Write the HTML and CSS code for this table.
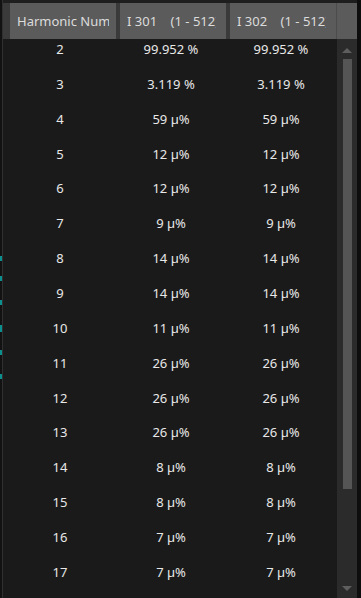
FILE: index.html
```html
<!DOCTYPE html>
<html>
<head>
<meta charset="utf-8">
<link rel="stylesheet" href="styles.css">
</head>
<body>
<div class="frame">
  <div class="edge">
    <span class="mark m1"></span><span class="mark m2"></span><span class="mark m3"></span><span class="mark m4"></span><span class="mark m5"></span><span class="mark m6"></span>
  </div>
  <div class="table">
    <div class="head">
      <div class="hcell first"><span>Harmonic Number</span></div>
      <div class="hcell"><span>I 301    (1 - 512)</span></div>
      <div class="hcell"><span>I 302    (1 - 512)</span></div>
      <div class="hcorner"></div>
    </div>
    <div class="main">
      <div class="rows-clip">
        <div class="rows">
          <div class="row"><span>2</span><span>99.952 %</span><span>99.952 %</span></div>
          <div class="row"><span>3</span><span>3.119 %</span><span>3.119 %</span></div>
          <div class="row"><span>4</span><span>59 µ%</span><span>59 µ%</span></div>
          <div class="row"><span>5</span><span>12 µ%</span><span>12 µ%</span></div>
          <div class="row"><span>6</span><span>12 µ%</span><span>12 µ%</span></div>
          <div class="row"><span>7</span><span>9 µ%</span><span>9 µ%</span></div>
          <div class="row"><span>8</span><span>14 µ%</span><span>14 µ%</span></div>
          <div class="row"><span>9</span><span>14 µ%</span><span>14 µ%</span></div>
          <div class="row"><span>10</span><span>11 µ%</span><span>11 µ%</span></div>
          <div class="row"><span>11</span><span>26 µ%</span><span>26 µ%</span></div>
          <div class="row"><span>12</span><span>26 µ%</span><span>26 µ%</span></div>
          <div class="row"><span>13</span><span>26 µ%</span><span>26 µ%</span></div>
          <div class="row"><span>14</span><span>8 µ%</span><span>8 µ%</span></div>
          <div class="row"><span>15</span><span>8 µ%</span><span>8 µ%</span></div>
          <div class="row"><span>16</span><span>7 µ%</span><span>7 µ%</span></div>
          <div class="row"><span>17</span><span>7 µ%</span><span>7 µ%</span></div>
        </div>
      </div>
      <div class="scrollbar">
        <div class="arrow up"></div>
        <div class="track"><div class="thumb"></div></div>
        <div class="arrow down"></div>
      </div>
    </div>
  </div>
  <div class="redge"></div>
</div>
</body>
</html>
```
FILE: styles.css
```css
html, body {
  margin: 0;
  padding: 0;
  background: #1a1a1a;
}
body {
  font-family: "Noto Sans", "Open Sans", sans-serif;
  font-size: 13px;
  color: #e8e8e8;
}
.frame {
  width: 361px;
  height: 598px;
  display: flex;
  overflow: hidden;
}
.edge {
  width: 2px;
  background: #121212;
  border-right: 1px solid #303030;
  position: relative;
  flex: none;
}
.mark {
  position: absolute;
  left: 0;
  width: 2px;
  height: 5px;
  background: #0b8f8f;
}
.m1 { top: 256px; }
.m2 { top: 276px; }
.m3 { top: 300px; }
.m4 { top: 325px; height: 7px; }
.m5 { top: 350px; }
.m6 { top: 374px; }
.table {
  flex: 1;
  display: flex;
  flex-direction: column;
  min-width: 0;
  background: #1a1a1a;
  padding-top: 3px;
  background-image: linear-gradient(#1e1e1e, #1e1e1e);
  background-size: 100% 3px;
  background-repeat: no-repeat;
}
.head {
  height: 36px;
  background: #3a3a3a;
  display: grid;
  grid-template-columns: 106px 106px 106px 21px;
  column-gap: 4px;
  padding-left: 7px;
  flex: none;
}
.hcell {
  background: #5b5b5b;
  color: #dcdcdc;
  padding: 0 10px 0 7px;
  line-height: 36px;
  min-width: 0;
}
.hcell.first {
  padding-right: 7px;
}
.hcell span {
  display: block;
  white-space: pre;
  overflow: hidden;
}
.hcorner {
  background: #5b5b5b;
  margin-left: -4px;
  border-left: 1px solid #4c4c4c;
  width: 20px;
}
.main {
  flex: 1;
  display: flex;
  min-height: 0;
}
.rows-clip {
  flex: 1;
  overflow: hidden;
  padding-left: 7px;
}
.rows {
  margin-top: -7.5px;
}
.row {
  height: 34.87px;
  display: grid;
  grid-template-columns: 106px 110px 110px;
  align-items: center;
  text-align: center;
}
.row span:first-child {
  margin-left: -6px;
}
.scrollbar {
  width: 20px;
  background: #2b2b2b;
  display: flex;
  flex-direction: column;
  align-items: center;
  flex: none;
}
.arrow {
  width: 0;
  height: 0;
  border-left: 5px solid transparent;
  border-right: 5px solid transparent;
  flex: none;
}
.arrow.up {
  border-bottom: 5px solid #5e5e5e;
  margin-top: 9px;
}
.arrow.down {
  border-top: 5px solid #5e5e5e;
  margin-bottom: 7px;
}
.track {
  flex: 1;
  width: 100%;
  display: flex;
  justify-content: center;
  padding-top: 6px;
}
.thumb {
  width: 9px;
  height: 430px;
  background: #555555;
}
.redge {
  width: 4px;
  background: #0e0e0e;
  flex: none;
}
```
